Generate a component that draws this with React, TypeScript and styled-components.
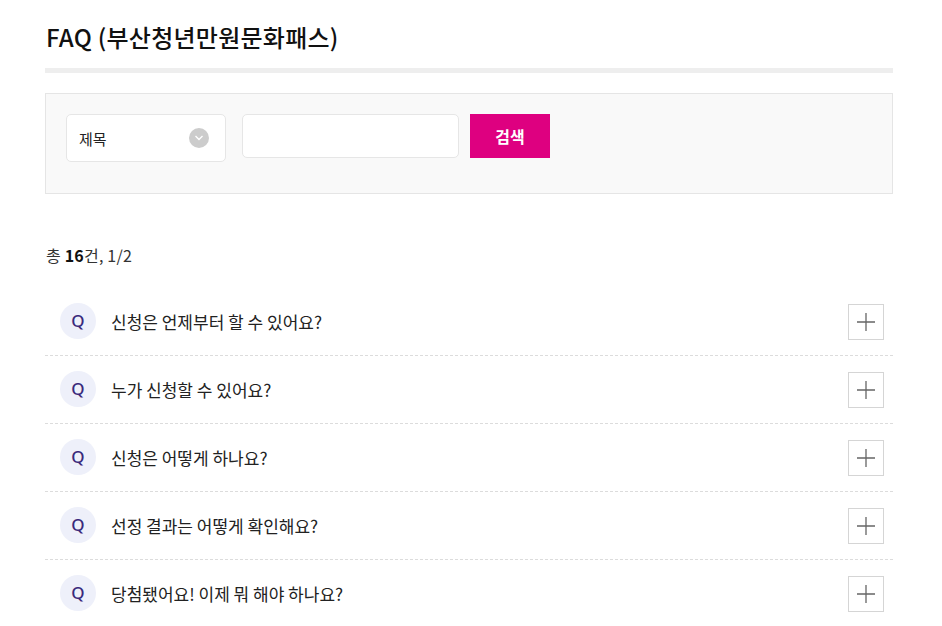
import React from "react";
import styled, { createGlobalStyle } from "styled-components";

const Global = createGlobalStyle`
  html, body { margin: 0; padding: 0; background: #fff; }
  body { font-family: "Noto Sans CJK KR", "Noto Sans", sans-serif; color: #222; }
  * { box-sizing: border-box; }
`;

const Page = styled.div`
  width: 942px;
  padding: 19px 49px 0 45px;
`;

const Title = styled.h2`
  margin: 0;
  padding: 0 0 13px 1px;
  font-size: 24px;
  line-height: 36px;
  font-weight: 500;
  letter-spacing: 0.25px;
  color: #111;
  border-bottom: 5px solid #eeeeee;
`;

const SearchBox = styled.div`
  margin-top: 20px;
  display: flex;
  align-items: flex-start;
  height: 101px;
  padding: 20px;
  background: #f9f9f9;
  border: 1px solid #e5e5e5;
`;

const Select = styled.div`
  width: 160px;
  height: 48px;
  display: flex;
  align-items: center;
  justify-content: space-between;
  padding: 0 16px 0 12px;
  background: #fff;
  border: 1px solid #e6e6e6;
  border-radius: 5px;
  font-size: 15px;
  color: #222;
`;

const Chevron = styled.span`
  width: 20px;
  height: 20px;
  border-radius: 50%;
  background: #cccccc;
  display: flex;
  align-items: center;
  justify-content: center;
`;

const Input = styled.div`
  margin-left: 16px;
  width: 217px;
  height: 44px;
  background: #fff;
  border: 1px solid #e6e6e6;
  border-radius: 5px;
`;

const Button = styled.button`
  margin-left: 11px;
  width: 80px;
  height: 44px;
  border: 0;
  background: #de0080;
  color: #fff;
  font-family: inherit;
  font-size: 16px;
  font-weight: 700;
  padding: 0;
`;

const Count = styled.p`
  margin: 49px 0 0 1px;
  font-size: 16px;
  line-height: 24px;
  color: #333;
  letter-spacing: 0.2px;
  b { color: #111; font-weight: 700; }
`;

const List = styled.ul`
  list-style: none;
  margin: 21px 0 0;
  padding: 0;
`;

const Row = styled.li`
  height: 68px;
  display: flex;
  align-items: center;
  padding: 0 9px 0 15px;
  border-bottom: 1px dashed #dcdcdc;
`;

const QBadge = styled.span`
  flex: none;
  width: 36px;
  height: 36px;
  border-radius: 50%;
  background: #eef0fa;
  color: #3a2a7c;
  font-family: "Noto Sans", sans-serif;
  font-size: 17px;
  font-weight: 500;
  display: flex;
  align-items: center;
  justify-content: center;
  margin-top: -2px;
`;

const Question = styled.span`
  flex: 1;
  margin-left: 15px;
  font-size: 17px;
  letter-spacing: 0;
  color: #222;
`;

const Toggle = styled.span`
  flex: none;
  width: 36px;
  height: 36px;
  border: 1px solid #d5d5d5;
  display: flex;
  align-items: center;
  justify-content: center;
`;

const questions = [
  "신청은 언제부터 할 수 있어요?",
  "누가 신청할 수 있어요?",
  "신청은 어떻게 하나요?",
  "선정 결과는 어떻게 확인해요?",
  "당첨됐어요! 이제 뭐 해야 하나요?",
];

export default function App() {
  return (
    <Page>
      <Global />
      <Title>FAQ (부산청년만원문화패스)</Title>
      <SearchBox>
        <Select>
          <span>제목</span>
          <Chevron>
            <svg width="10" height="6" viewBox="0 0 10 6">
              <path d="M1.5 1 L5 4.5 L8.5 1" fill="none" stroke="#fff" strokeWidth="1.4" />
            </svg>
          </Chevron>
        </Select>
        <Input />
        <Button>검색</Button>
      </SearchBox>
      <Count>
        총 <b>16</b>건, 1/2
      </Count>
      <List>
        {questions.map((q) => (
          <Row key={q}>
            <QBadge>Q</QBadge>
            <Question>{q}</Question>
            <Toggle>
              <svg width="18" height="18" viewBox="0 0 18 18">
                <path d="M0 9 H18 M9 0 V18" stroke="#666" strokeWidth="1.3" />
              </svg>
            </Toggle>
          </Row>
        ))}
      </List>
    </Page>
  );
}
